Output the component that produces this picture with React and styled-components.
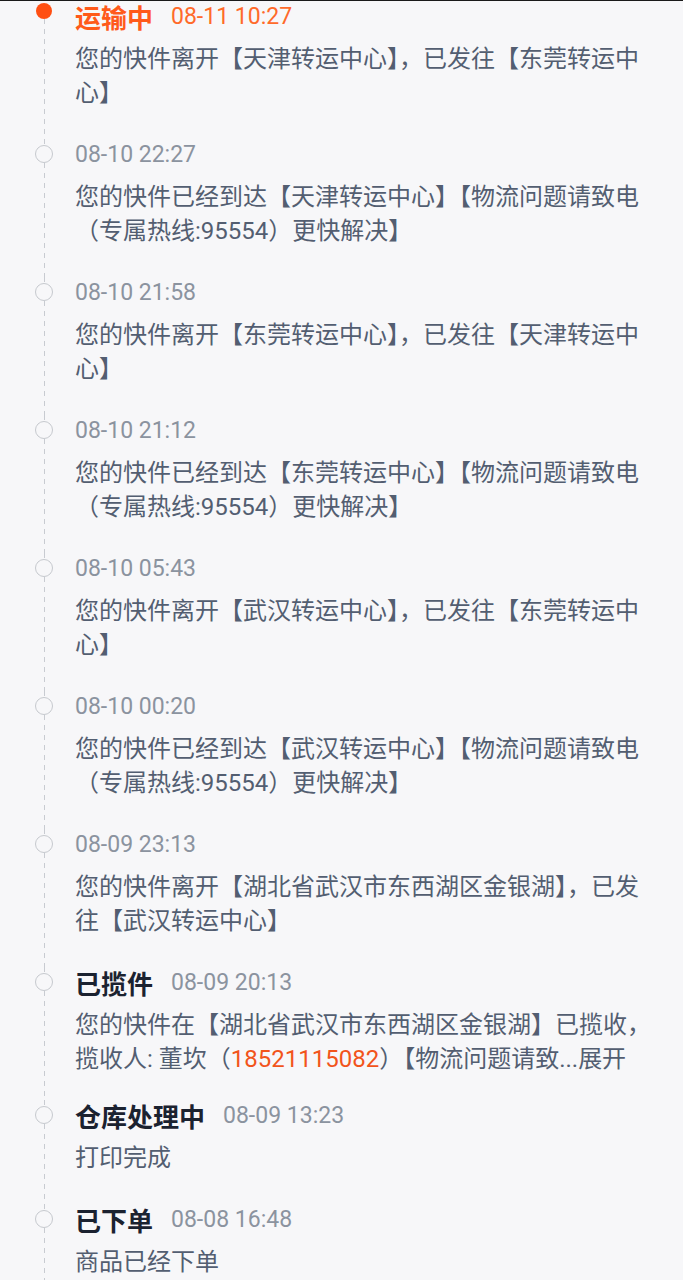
import React from 'react';
import styled, { createGlobalStyle } from 'styled-components';

const GlobalStyle = createGlobalStyle`
  html, body {
    margin: 0;
    padding: 0;
    background: #f7f7f9;
  }
  body {
    font-family: Roboto, "Noto Sans CJK SC", "Noto Sans", sans-serif;
  }
`;

const Page = styled.main`
  height: 1280px;
  box-sizing: border-box;
  border-top: 1px solid #1a1a1a;
  overflow: hidden;
  display: flex;
  flex-direction: column;
`;

const Item = styled.section`
  display: flex;
  align-items: stretch;
  padding-left: 28px;
`;

const Rail = styled.div`
  width: 32px;
  flex-shrink: 0;
  display: flex;
  flex-direction: column;
  align-items: center;
  margin-right: 15px;
`;

const dashed = `
  width: 1px;
  background: repeating-linear-gradient(
    to bottom,
    #c8cbd1 0 5px,
    transparent 5px 10px
  );
`;

const RailTop = styled.div`
  height: ${p => (p.$first ? '2px' : '6px')};
  ${p => (p.$first ? 'width: 1px;' : dashed)}
`;

const RailLine = styled.div`
  flex: 1;
  ${dashed}
`;

const Dot = styled.div`
  width: ${p => (p.$active ? '16px' : '18px')};
  height: ${p => (p.$active ? '16px' : '18px')};
  box-sizing: border-box;
  border-radius: 50%;
  flex-shrink: 0;
  background: ${p => (p.$active ? '#ff4f12' : '#f7f7f9')};
  border: ${p => (p.$active ? 'none' : '1.5px solid #c6c9ce')};
`;

const Body = styled.div`
  flex: 1;
  padding-bottom: ${p => (p.$tight ? '24px' : '29px')};
`;

const Header = styled.div`
  height: 30px;
  display: flex;
  align-items: center;
  margin-bottom: 11px;
`;

const Title = styled.span`
  font-size: 26px;
  font-weight: 700;
  color: ${p => (p.$active ? '#ff5a1a' : '#1b2230')};
  margin-right: 18px;
  white-space: nowrap;
`;

const Time = styled.span`
  font-size: 23px;
  color: ${p => (p.$active ? '#ff6a2a' : '#8b939f')};
  white-space: nowrap;
`;

const Content = styled.div`
  font-size: 24px;
  line-height: 34px;
  color: #535e71;
`;

const Line = styled.div`
  white-space: nowrap;
`;

const Phone = styled.span`
  color: #f2541b;
`;

const Expand = styled.span`
  color: #535e71;
`;

const events = [
  {
    title: '运输中',
    time: '08-11 10:27',
    active: true,
    lines: ['您的快件离开【天津转运中心】，已发往【东莞转运中', '心】'],
  },
  {
    time: '08-10 22:27',
    lines: ['您的快件已经到达【天津转运中心】【物流问题请致电', '（专属热线:95554）更快解决】'],
  },
  {
    time: '08-10 21:58',
    lines: ['您的快件离开【东莞转运中心】，已发往【天津转运中', '心】'],
  },
  {
    time: '08-10 21:12',
    lines: ['您的快件已经到达【东莞转运中心】【物流问题请致电', '（专属热线:95554）更快解决】'],
  },
  {
    time: '08-10 05:43',
    lines: ['您的快件离开【武汉转运中心】，已发往【东莞转运中', '心】'],
  },
  {
    time: '08-10 00:20',
    lines: ['您的快件已经到达【武汉转运中心】【物流问题请致电', '（专属热线:95554）更快解决】'],
  },
  {
    time: '08-09 23:13',
    lines: ['您的快件离开【湖北省武汉市东西湖区金银湖】，已发', '往【武汉转运中心】'],
  },
  {
    title: '已揽件',
    time: '08-09 20:13',
    collapsed: true,
    lines: [
      '您的快件在【湖北省武汉市东西湖区金银湖】已揽收，',
      <>
        揽收人: 董坎（<Phone>18521115082</Phone>）【物流问题请致...<Expand>展开</Expand>
      </>,
    ],
  },
  { title: '仓库处理中', time: '08-09 13:23', lines: ['打印完成'] },
  { title: '已下单', time: '08-08 16:48', lines: ['商品已经下单'] },
];

export default function App() {
  return (
    <>
      <GlobalStyle />
      <Page>
        {events.map((ev, i) => (
          <Item key={i}>
            <Rail>
              <RailTop $first={i === 0} />
              <Dot $active={ev.active} />
              <RailLine />
            </Rail>
            <Body $tight={ev.collapsed}>
              <Header>
                {ev.title && <Title $active={ev.active}>{ev.title}</Title>}
                <Time $active={ev.active}>{ev.time}</Time>
              </Header>
              <Content>
                {ev.lines.map((line, j) => (
                  <Line key={j}>{line}</Line>
                ))}
              </Content>
            </Body>
          </Item>
        ))}
      </Page>
    </>
  );
}
